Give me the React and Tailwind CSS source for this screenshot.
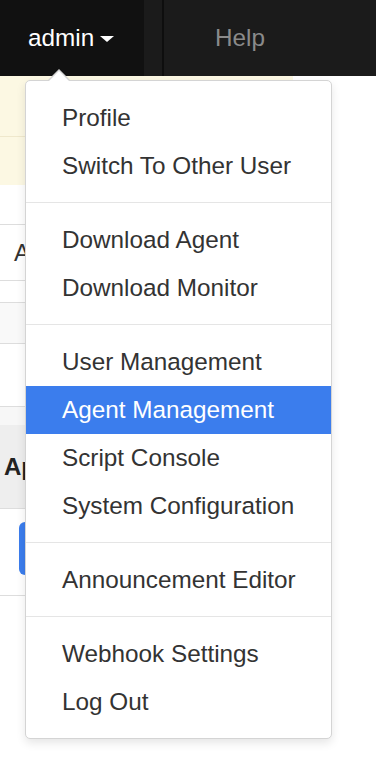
import React from "react"

const groups = [
  ["Profile", "Switch To Other User"],
  ["Download Agent", "Download Monitor"],
  ["User Management", "Agent Management", "Script Console", "System Configuration"],
  ["Announcement Editor"],
  ["Webhook Settings", "Log Out"],
]

const ACTIVE = "Agent Management"

const Line = () => <div className="h-px bg-[#dddddd]" />

const App = () => {
  return (
    <div
      className="relative w-[376px] h-[762px] overflow-hidden bg-white"
      style={{ fontFamily: '"Liberation Sans", Arial, sans-serif' }}
    >
      {/* Navbar */}
      <div className="flex h-[76px] bg-[#1b1b1b]">
        <div className="flex w-[144px] items-center bg-[#111111] pl-[28px]">
          <span className="text-[24.3px] leading-none text-white">admin</span>
          <span className="ml-[6px] mt-[2px] h-0 w-0 border-x-[7px] border-t-[6px] border-x-transparent border-t-white" />
        </div>
        <div className="w-[18px]" />
        <div className="w-[2px] bg-[#0e0e0e]" />
        <div className="flex items-center pl-[51px]">
          <span className="text-[24.3px] leading-none text-[#8a8a8a]">Help</span>
        </div>
      </div>

      {/* Page content behind the menu */}
      <div className="w-[293px]">
        <div className="h-[109px] bg-[#fcf8e3]">
          <div className="h-[60px]" />
          <div className="h-px bg-[#efe8cc]" />
        </div>
        <div className="h-[39px]" />
        <Line />
        <div className="flex h-[55px] items-center pl-[14px] text-[24px] text-[#333]">A</div>
        <Line />
        <div className="h-[21px]" />
        <Line />
        <div className="h-[40px] bg-[#f9f9f9]" />
        <Line />
        <div className="h-[62px]" />
        <Line />
        <div className="h-[18px] bg-[#f7f7f7]" />
        <div className="flex h-[83px] items-center bg-[#eeeeee] pl-[4px] text-[24px] font-bold text-[#222]">Ap</div>
        <Line />
        <div className="h-[86px] pl-[19px] pt-[13px]">
          <div className="h-[53px] w-[60px] rounded-[6px] bg-[#3b7ded]" />
        </div>
        <Line />
      </div>

      {/* Dropdown menu */}
      <div className="absolute left-[25px] top-[80px] w-[307px] rounded-[5px] border border-[#d4d4d4] bg-white pt-[13px] pb-[12px] shadow-[0_4px_10px_rgba(0,0,0,0.1)]">
        <span className="absolute left-[21px] top-[-12px] h-0 w-0 border-x-[12px] border-b-[12px] border-x-transparent border-b-[#d4d4d4]" />
        <span className="absolute left-[22px] top-[-10px] h-0 w-0 border-x-[11px] border-b-[11px] border-x-transparent border-b-white" />
        {groups.map((items, gi) => (
          <div key={gi}>
            {gi > 0 && <div className="mt-[12px] mb-[13px] h-px bg-[#e5e5e5]" />}
            {items.map((label) => (
              <div
                key={label}
                className={
                  label === ACTIVE
                    ? "flex h-[48px] items-center bg-[#3b7ded] pl-[36px] text-[24.3px] text-white"
                    : "flex h-[48px] items-center pl-[36px] text-[24.3px] text-[#333333]"
                }
              >
                {label}
              </div>
            ))}
          </div>
        ))}
      </div>
    </div>
  )
}

export default App
